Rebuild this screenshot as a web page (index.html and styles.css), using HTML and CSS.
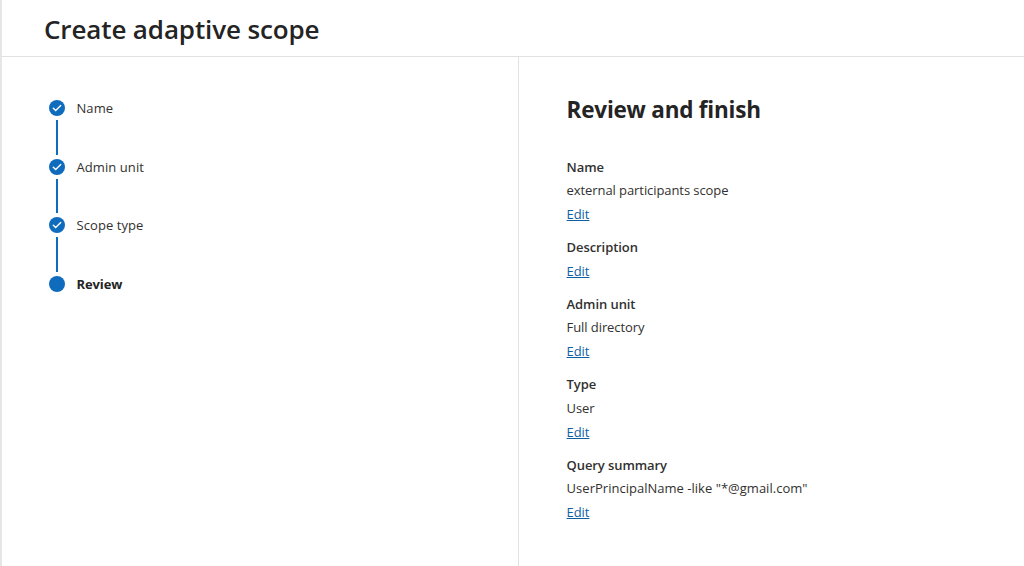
FILE: index.html
```html
<!DOCTYPE html>
<html lang="en">
<head>
    <meta charset="UTF-8">
    <meta name="viewport" content="width=device-width, initial-scale=1.0">
    <title>Create adaptive scope</title>
    <link rel="stylesheet" href="styles.css">
</head>
<body>
    <header class="header">
        <h1>Create adaptive scope</h1>
    </header>
    <main class="wizard">
        <nav class="steps">
            <div class="step">
                <svg class="dot" viewBox="0 0 16 16"><circle cx="8" cy="8" r="8"/><path d="M4.3 8.2l2.4 2.4 5-5"/></svg>
                <span>Name</span>
            </div>
            <div class="line"></div>
            <div class="step">
                <svg class="dot" viewBox="0 0 16 16"><circle cx="8" cy="8" r="8"/><path d="M4.3 8.2l2.4 2.4 5-5"/></svg>
                <span>Admin unit</span>
            </div>
            <div class="line"></div>
            <div class="step">
                <svg class="dot" viewBox="0 0 16 16"><circle cx="8" cy="8" r="8"/><path d="M4.3 8.2l2.4 2.4 5-5"/></svg>
                <span>Scope type</span>
            </div>
            <div class="line"></div>
            <div class="step current">
                <svg class="dot" viewBox="0 0 16 16"><circle cx="8" cy="8" r="8"/></svg>
                <span>Review</span>
            </div>
        </nav>
        <section class="review">
            <h2>Review and finish</h2>
            <div class="field">
                <h3>Name</h3>
                <p>external participants scope</p>
                <a href="#">Edit</a>
            </div>
            <div class="field">
                <h3>Description</h3>
                <a href="#">Edit</a>
            </div>
            <div class="field">
                <h3>Admin unit</h3>
                <p>Full directory</p>
                <a href="#">Edit</a>
            </div>
            <div class="field">
                <h3>Type</h3>
                <p>User</p>
                <a href="#">Edit</a>
            </div>
            <div class="field">
                <h3>Query summary</h3>
                <p class="query">UserPrincipalName -like "*@gmail.com"</p>
                <a href="#">Edit</a>
            </div>
        </section>
    </main>
</body>
</html>
```
FILE: styles.css
```css
* {
    box-sizing: border-box;
}
body {
    margin: 0;
    height: 566px;
    display: flex;
    flex-direction: column;
    overflow: hidden;
    border-left: 2px solid #e6e6e6;
    font-family: "Open Sans", "Noto Sans", sans-serif;
    font-size: 13px;
    color: #323130;
    background: #fff;
}
h1, h2, h3, p {
    margin: 0;
}
.header {
    height: 57px;
    padding: 10px 0 0 42px;
    border-bottom: 1px solid #e1e1e1;
}
h1 {
    font-size: 26px;
    font-weight: 600;
    line-height: 38px;
    letter-spacing: -0.13px;
    color: #242424;
}
.wizard {
    flex: 1;
    display: flex;
}
.steps {
    width: 517px;
    padding: 38.8px 0 0 46.7px;
    border-right: 1px solid #e1e1e1;
}
.step {
    display: flex;
    align-items: center;
    gap: 11.8px;
    height: 24px;
    letter-spacing: 0.08px;
}
.dot {
    width: 16px;
    height: 16px;
}
.dot circle {
    fill: #0f6cbd;
}
.dot path {
    fill: none;
    stroke: #fff;
    stroke-width: 1.4;
    stroke-linecap: round;
}
.line {
    width: 2px;
    height: 34.8px;
    margin-left: 7px;
    background: #0f6cbd;
}
.current {
    font-weight: 700;
    letter-spacing: -0.1px;
    color: #242424;
}
.review {
    padding: 36px 0 0 47.6px;
}
h2 {
    margin-bottom: 29.5px;
    font-size: 22.5px;
    font-weight: 700;
    line-height: 33px;
    letter-spacing: -0.22px;
    color: #242424;
}
.field {
    margin-bottom: 9.7px;
    line-height: 23.6px;
    letter-spacing: -0.08px;
}
.field h3 {
    font-size: 13px;
    font-weight: 600;
}
.field .query {
    letter-spacing: 0.02px;
}
.field a {
    display: table;
    color: #115ea3;
}
```
